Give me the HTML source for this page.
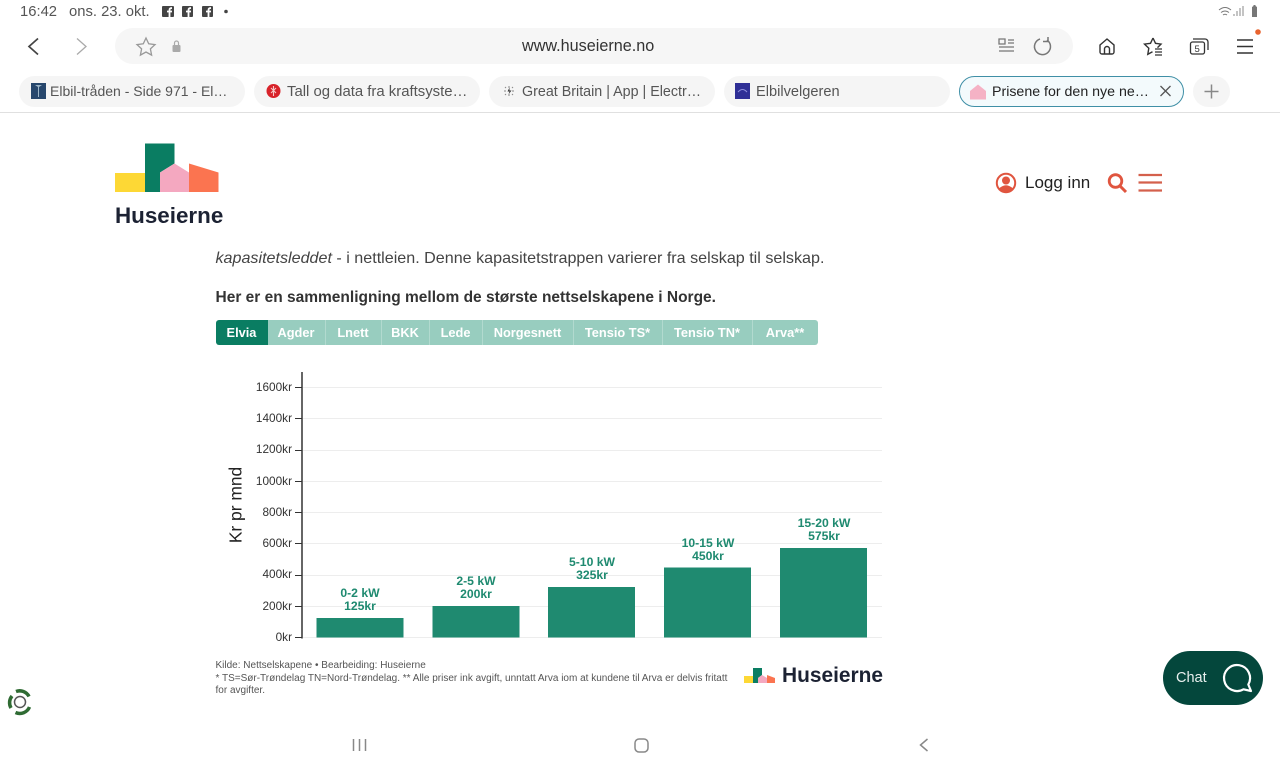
<!DOCTYPE html>
<html lang="no"><head><meta charset="utf-8"><title>Huseierne</title>
<style>
html,body{margin:0;padding:0;background:#fff}
body{width:1280px;height:768px;position:relative;overflow:hidden;font-family:"Liberation Sans",sans-serif}
.t{position:absolute;white-space:nowrap;line-height:1}
.pill{position:absolute;top:76px;height:31px;width:226px;border-radius:16px;background:#f5f5f5}
.tabt{color:#555;top:84.5px}
svg{position:absolute;left:0;top:0}
.btn{position:absolute;top:320px;height:25px;background:#98cdbf;color:#fff;font-size:12.8px;font-weight:bold;line-height:25px;text-align:center;box-sizing:border-box;border-right:1px solid #b2dacf}
.tick{font-size:11.8px;color:#333;text-align:right;width:60px;left:232px}
.bl{font-size:12.2px;font-weight:bold;color:#1f8a70;text-align:center;width:100px;line-height:13px}
.src{font-size:10px;color:#555;left:215.5px}
</style></head><body>
<div class="t" style="left:20px;top:5px;font-size:14.800px;color:#555">16:42</div>
<div class="t" style="left:69px;top:5px;font-size:14.800px;color:#555">ons. 23. okt.</div>
<div style="position:absolute;left:115px;top:28px;width:958px;height:36px;border-radius:18px;background:#f6f6f6"></div>
<div class="t" style="left:522px;top:38px;font-size:16.200px;color:#333">www.huseierne.no</div>
<div class="pill" style="left:19px"></div><div class="pill" style="left:254px"></div><div class="pill" style="left:489px"></div><div class="pill" style="left:724px"></div>
<div class="pill" style="left:959px;background:#f3fafc;border:1.5px solid #3f8fa6;box-sizing:border-box;width:225px"></div>
<div style="position:absolute;left:1193px;top:76px;width:37px;height:31px;border-radius:16px;background:#f5f5f5"></div>
<div class="t tabt" style="left:50px;top:84px;font-size:14.000px">Elbil-tråden - Side 971 - El…</div>
<div class="t tabt" style="left:287px;font-size:14.900px">Tall og data fra kraftsyste…</div>
<div class="t tabt" style="left:522px;font-size:14.300px">Great Britain | App | Electr…</div>
<div class="t tabt" style="left:756px;font-size:14.600px">Elbilvelgeren</div>
<div class="t tabt" style="left:992px;color:#222;font-size:14.200px">Prisene for den nye ne…</div>
<div style="position:absolute;left:0;top:112px;width:1280px;height:1px;background:#e0e0e0"></div>

<svg width="1280" height="768" viewBox="0 0 1280 768" fill="none">
<g fill="#444"><rect x="162" y="6" width="12" height="11" rx="1"/><rect x="182" y="6" width="11" height="11" rx="1"/><rect x="202" y="6" width="11" height="11" rx="1"/><circle cx="226" cy="11.500" r="1.800"/></g>
<g stroke="#fff" stroke-width="1.800"><path d="M169.500 17v-7q0-2 2.500-2M167 11.500h5M188.500 17v-7q0-2 2.500-2M186 11.500h5M208.500 17v-7q0-2 2.500-2M206 11.500h5"/></g>
<path d="M1219 10q6-5 12 0M1221 12.500q4-3 8 0M1223 15q2-1.500 4 0" stroke="#777" stroke-width="1"/>
<path d="M1234 16v-2M1237 16v-5M1240 16v-8M1243 16v-10" stroke="#888"/>
<path d="M1252 17v-10l1.500-1v-1h2v1l1.500 1v10z" fill="#777"/>
<path d="M38 38.500l-9 8 9 8" stroke="#444" stroke-width="1.700"/>
<path d="M77 38.500l9 8-9 8" stroke="#aaa" stroke-width="1.300"/>
<path d="M146 38l2.700 5.800 6.300.8-4.600 4.300 1.200 6.200-5.600-3.100-5.600 3.100 1.200-6.200-4.600-4.300 6.300-.8z" stroke="#999" stroke-width="1.300"/>
<rect x="172.500" y="45" width="8" height="7" rx="1" fill="#aaa"/><path d="M174.500 45v-2a2 2 0 0 1 4 0v2" stroke="#aaa" stroke-width="1.200"/>
<path d="M999 39h6v5h-6zM1008 40h6M1008 43h6M999 47h15M999 51h15" stroke="#777" stroke-width="1.300"/>
<path d="M1040 39a8 8 0 1 0 7 1M1048 37v4.500h-5" stroke="#777" stroke-width="1.500"/>
<path d="M1100 45l7-6 7 6v7a2 2 0 0 1-2 2h-10a2 2 0 0 1-2-2zM1104.500 54v-5a2.500 2.500 0 0 1 5 0v5" stroke="#333" stroke-width="1.400"/>
<path d="M1153 38l2.500 5.300 5.500.8-3.500 3.500M1153 38l-2.500 5.300-6 .8 4.300 4.200-1 6 4.700-2.500" stroke="#333" stroke-width="1.400"/>
<path d="M1155 49h7M1155 52h7M1155 55h7" stroke="#333" stroke-width="1.200"/>
<rect x="1190.500" y="42" width="14" height="12" rx="2" stroke="#333" stroke-width="1.300"/>
<path d="M1193 39h12a3 3 0 0 1 3 3v8" stroke="#333" stroke-width="1.300"/>
<text x="1194.500" y="52" font-family="Liberation Sans" font-size="9.500" fill="#333">5</text>
<path d="M1237 40h16M1237 46.500h16M1237 53h16" stroke="#333" stroke-width="1.500"/>
<circle cx="1258" cy="32" r="2.800" fill="#e8632e"/>
<rect x="31" y="83" width="15" height="16" fill="#27476d"/><path d="M35 85h7l-3 2v10h-1v-10z" fill="#9db6c8"/>
<circle cx="273.500" cy="91" r="7" fill="#d8232a"/><path d="M273.500 86v10M271 88l5 5M276 88l-5 5" stroke="#f6c9c9" stroke-width="1.100"/>
<path d="M509 86v2M509 94v2M504 91h2M512 91h2M505 87l1 1M512 87l1 1M505 95l1-1M512 95l1-1" stroke="#888"/><path d="M509.500 87.500l-2 4h2l-1 3 3-4h-2z" fill="#333"/>
<rect x="735" y="83" width="15" height="16" fill="#2f2f96"/><path d="M738 92q4.500-5 9 0" stroke="#8f8fdc"/>
<path d="M970 91l8-6.500 8 6.500v8.500h-16z" fill="#f5b2c5"/>
<path d="M1160.500 86l10 10M1170.500 86l-10 10" stroke="#555" stroke-width="1.300"/>
<path d="M1211.500 84.500v14M1204.500 91.500h14" stroke="#888" stroke-width="1.500"/>
<rect x="115" y="173" width="30" height="19" fill="#fdd835"/>
<path d="M145 143.500h29.500v20l-14.500 9v19.500h-15z" fill="#0a7d62"/>
<path d="M160 172.500l14.500-9 14.500 9v19.500h-29z" fill="#f4a8c0"/>
<path d="M189 163.500l29.500 9v19.500h-29.500z" fill="#fb7450"/>
<circle cx="1006" cy="183" r="9.200" stroke="#e0553f" stroke-width="2"/>
<circle cx="1006" cy="180.500" r="4" fill="#e0553f"/><path d="M998.500 189q7.500-7.500 15 0q-7.500 7.500-15 0" fill="#e0553f"/>
<circle cx="1115.500" cy="181" r="6.300" stroke="#e0553f" stroke-width="2.800"/><path d="M1120 186l6 6" stroke="#e0553f" stroke-width="3"/>
<path d="M1138.500 175h23.500M1138.500 182.500h23.500M1138.500 190.500h23.500" stroke="#d4604c" stroke-width="2.200"/>
<g stroke="#ededed"><path d="M303 387.500h579M303 418.500h579M303 450.500h579M303 481.500h579M303 512.500h579M303 543.500h579M303 575.500h579M303 606.500h579M303 637.500h579"/></g>
<g fill="#1f8a70"><rect x="316.500" y="618" width="87" height="19.500"/><rect x="432.500" y="606" width="87" height="31.500"/><rect x="548" y="587" width="87" height="50.500"/><rect x="664" y="567.500" width="87" height="70"/><rect x="780" y="548" width="87" height="89.500"/></g>
<path d="M302 372v266.500" stroke="#333" stroke-width="1.500"/>
<g stroke="#333"><path d="M295 387.500h7M295 418.500h7M295 450.500h7M295 481.500h7M295 512.500h7M295 543.500h7M295 575.500h7M295 606.500h7M295 637.500h7"/></g>
<rect x="744" y="676" width="9" height="7" fill="#fdd835"/><path d="M753 668h9v7l-4 3v5h-5z" fill="#0a7d62"/><path d="M758 678l4-3 5 3v5h-9z" fill="#f4a8c0"/><path d="M767 675l8 3v5h-8z" fill="#fb7450"/>
<rect x="1163" y="651" width="100" height="54" rx="27" fill="#04473c"/>
<path d="M1243.500 689.300A13 13 0 1 1 1248.300 684.500L1251 691Z" stroke="#fff" stroke-width="2.200" stroke-linejoin="round"/>
<circle cx="20" cy="702" r="5.500" stroke="#555" stroke-width="1.500"/>
<path d="M11 708a10.500 10.500 0 0 1 1-12M16 691.500a10.500 10.500 0 0 1 13 5M29.500 707a10.500 10.500 0 0 1-14 5.500" stroke="#2f6b33" stroke-width="3.500"/>
<path d="M353.500 739v12M359.500 739v12M365.500 739v12" stroke="#888" stroke-width="1.500"/>
<rect x="635" y="739" width="13" height="13" rx="4" stroke="#888" stroke-width="1.500"/>
<path d="M927.500 739l-7 6 7 6" stroke="#888" stroke-width="1.500"/>
</svg>

<div class="t" style="left:115px;top:205px;font-size:22.400px;font-weight:bold;color:#1c2233">Huseierne</div>
<div class="t" style="left:1025px;top:174px;font-size:17px;color:#222">Logg inn</div>
<div class="t" style="left:215.500px;top:250px;font-size:16.120px;color:#444"><i>kapasitetsleddet</i> - i nettleien. Denne kapasitetstrappen varierer fra selskap til selskap.</div>
<div class="t" style="left:215.500px;top:290px;font-size:15.500px;font-weight:bold;color:#333">Her er en sammenligning mellom de største nettselskapene i Norge.</div>

<div class="btn" style="left:215.500px;width:52px;background:#0a7d62;border:0;border-radius:3px 0 0 3px">Elvia</div>
<div class="btn" style="left:267.500px;width:58px">Agder</div>
<div class="btn" style="left:325.500px;width:56px">Lnett</div>
<div class="btn" style="left:381.500px;width:48px">BKK</div>
<div class="btn" style="left:429.500px;width:53px">Lede</div>
<div class="btn" style="left:482.500px;width:91px">Norgesnett</div>
<div class="btn" style="left:573.500px;width:89px">Tensio TS*</div>
<div class="btn" style="left:662.500px;width:90px">Tensio TN*</div>
<div class="btn" style="left:752.500px;width:65px;border:0;border-radius:0 3px 3px 0">Arva**</div>

<div class="t tick" style="top:382px">1600kr</div>
<div class="t tick" style="top:413px">1400kr</div>
<div class="t tick" style="top:444px">1200kr</div>
<div class="t tick" style="top:476px">1000kr</div>
<div class="t tick" style="top:507px">800kr</div>
<div class="t tick" style="top:538px">600kr</div>
<div class="t tick" style="top:569px">400kr</div>
<div class="t tick" style="top:601px">200kr</div>
<div class="t tick" style="top:632px">0kr</div>
<div class="t" style="left:235.500px;top:505px;font-size:17.400px;color:#222;transform:translate(-50%,-50%) rotate(-90deg)">Kr pr mnd</div>

<div class="t bl" style="left:310px;top:587px">0-2 kW<br>125kr</div>
<div class="t bl" style="left:426px;top:575px">2-5 kW<br>200kr</div>
<div class="t bl" style="left:542px;top:556px">5-10 kW<br>325kr</div>
<div class="t bl" style="left:658px;top:537px">10-15 kW<br>450kr</div>
<div class="t bl" style="left:774px;top:517px">15-20 kW<br>575kr</div>

<div class="t src" style="top:661px">Kilde: Nettselskapene • Bearbeiding: Huseierne</div>
<div class="t src" style="top:674px">* TS=Sør-Trøndelag TN=Nord-Trøndelag. ** Alle priser ink avgift, unntatt Arva iom at kundene til Arva er delvis fritatt</div>
<div class="t src" style="top:686px">for avgifter.</div>
<div class="t" style="left:782px;top:666px;font-size:20.900px;font-weight:bold;color:#1c2233">Huseierne</div>
<div class="t" style="left:1176px;top:670.500px;font-size:14.500px;color:#e8f0ee">Chat</div>
</body></html>
